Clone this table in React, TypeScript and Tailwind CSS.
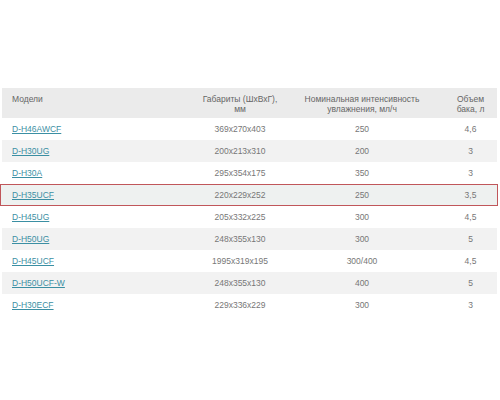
const rows = [
  ["D-H46AWCF", "369x270x403", "250", "4,6"],
  ["D-H30UG", "200x213x310", "200", "3"],
  ["D-H30A", "295x354x175", "350", "3"],
  ["D-H35UCF", "220x229x252", "250", "3,5"],
  ["D-H45UG", "205x332x225", "300", "4,5"],
  ["D-H50UG", "248x355x130", "300", "5"],
  ["D-H45UCF", "1995x319x195", "300/400", "4,5"],
  ["D-H50UCF-W", "248x355x130", "400", "5"],
  ["D-H30ECF", "229x336x229", "300", "3"],
];

export default function App() {
  return (
    <div
      className="w-[500px] h-[400px] bg-white pt-[88px] text-[8.5px] text-[#777]"
      style={{ fontFamily: '"Liberation Sans", Arial, sans-serif' }}
    >
      <div className="ml-[2px] mr-[3px]">
        <div className="grid grid-cols-[198px_80px_164px_1fr] bg-[#ebebeb] h-[30px] pt-[6px] leading-[10px] text-[#666]">
          <div className="pl-[10px]">Модели</div>
          <div className="text-center">
            Габариты (ШхВхГ),
            <br />
            мм
          </div>
          <div className="text-center">
            Номинальная интенсивность
            <br />
            увлажнения, мл/ч
          </div>
          <div className="text-center">
            Объем
            <br />
            бака, л
          </div>
        </div>
        {rows.map((r, i) => {
          const hl = i === 3;
          return (
            <div
              key={r[0]}
              className={
                "grid grid-cols-[198px_80px_164px_1fr] h-[22px] items-center " +
                (hl
                  ? "bg-[#eef1f0] border border-[#c0565a] -ml-[2px] pl-[1px] -mr-[1px]"
                  : i % 2 === 1
                  ? "bg-[#f2f2f2]"
                  : "bg-white")
              }
            >
              <div className="pl-[10px]">
                <span className="text-[#3b8fa3] underline underline-offset-1">{r[0]}</span>
              </div>
              <div className="text-center">{r[1]}</div>
              <div className="text-center">{r[2]}</div>
              <div className="text-center">{r[3]}</div>
            </div>
          );
        })}
      </div>
    </div>
  );
}
